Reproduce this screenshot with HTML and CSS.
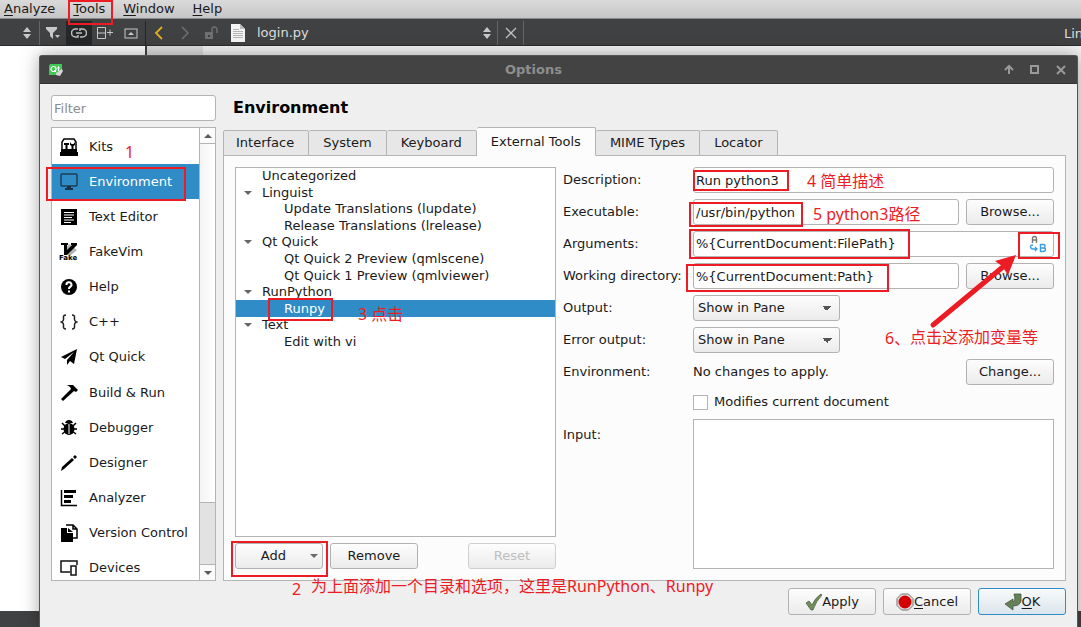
FILE: index.html
```html
<!DOCTYPE html>
<html lang="en">
<head>
<meta charset="utf-8">
<title>Options</title>
<link rel="stylesheet" href="styles.css">
</head>
<body>
<div class="ide">
  <nav class="menubar">
    <a href="#"><u>A</u>nalyze</a>
    <a href="#"><u>T</u>ools</a>
    <a href="#"><u>W</u>indow</a>
    <a href="#"><u>H</u>elp</a>
  </nav>
  <div class="toolbar">
    <div class="tool-left">
      <button class="tool tool-sep" aria-label="Switch view"><svg width="10" height="12" viewBox="0 0 10 12"><path d="M1 5L5 0L9 5ZM1 7H9L5 12Z" fill="#c8c8c8"/></svg></button>
      <button class="tool" aria-label="Filter"><svg width="16" height="14" viewBox="0 0 16 14"><path d="M1 1H12V3L8 7V13L5 10V7L1 3Z" fill="#c8c8c8"/><path d="M10 9H15L12.500 12Z" fill="#c8c8c8"/></svg></button>
      <button class="tool tool-on" aria-label="Synchronize"><svg width="16" height="12" viewBox="0 0 16 12" fill="none" stroke="#c0c0c0" stroke-width="1.500"><path d="M7 2H4.500A3.500 3.500 0 0 0 4.500 10H7V8M9 10H11.500A3.500 3.500 0 0 0 11.500 2H9V4M5 6H11"/></svg></button>
      <button class="tool" aria-label="Split"><svg width="16" height="14" viewBox="0 0 16 14" fill="none" stroke="#c8c8c8"><path d="M.5 1.500H8.500V12.500H.5ZM.5 7H8.500M10 6.500H16M13 3.500V9.500"/></svg></button>
      <button class="tool" aria-label="Close pane"><svg width="14" height="12" viewBox="0 0 14 12"><rect x="1" y="2" width="12" height="9" fill="none" stroke="#c8c8c8"/><path d="M4 8L7 5L10 8Z" fill="#c8c8c8"/></svg></button>
    </div>
    <button class="tool" aria-label="Back"><svg width="10" height="14" viewBox="0 0 10 14"><path d="M8 1L2 7L8 13" fill="none" stroke="#e0b01c" stroke-width="1.800"/></svg></button>
    <button class="tool" aria-label="Forward"><svg width="10" height="14" viewBox="0 0 10 14"><path d="M2 1L8 7L2 13" fill="none" stroke="#707070" stroke-width="1.500"/></svg></button>
    <button class="tool" aria-label="Unlocked"><svg width="14" height="14" viewBox="0 0 14 14"><path d="M1 6H9V13H1Z" fill="#707070"/><rect x="4" y="9" width="2" height="2" fill="#404142"/><path d="M8 6V3.500A2.500 2.500 0 0 1 13 3.500V7" fill="none" stroke="#707070" stroke-width="1.500"/></svg></button>
    <button class="file-picker">
      <svg width="14" height="18" viewBox="0 0 14 18"><path d="M0 0H9L14 5V18H0Z" fill="#f4f4f4"/><path d="M9 0V5H14Z" fill="#bbb"/><path d="M2 5.500H8M2 7.500H12M2 9.500H12M2 11.500H12M2 13.500H12" stroke="#b4b4b4"/></svg>
      <span class="file-name">login.py</span>
      <svg width="10" height="12" viewBox="0 0 10 12"><path d="M1 5L5 0L9 5ZM1 7H9L5 12Z" fill="#c8c8c8"/></svg>
    </button>
    <button class="tool tool-sep" aria-label="Close document"><svg width="12" height="12" viewBox="0 0 12 12"><path d="M1 1L11 11M11 1L1 11" stroke="#c0c0c0" stroke-width="1.300"/></svg></button>
    <span class="cursor-info">Line: 1</span>
  </div>
  <div class="workspace">
    <div class="project-pane"></div>
    <div class="gutter"></div>
    <div class="code"></div>
  </div>
  <div class="statusbar"></div>
</div>

<section class="dialog">
  <header class="titlebar">
    <svg width="16" height="14" viewBox="0 0 16 14"><path d="M2 1H14V8L10 12H1V3Z" fill="#3fc852"/><circle cx="5.500" cy="6" r="2.500" fill="none" stroke="#fff" stroke-width="1.200"/><path d="M6 7L8 9M10.500 3V8H12M9 5H12" stroke="#fff" fill="none"/><path d="M8 10L14 6L15 8L12 13L8 12Z" fill="#d5d5d5"/></svg>
    <h1>Options</h1>
    <div class="window-buttons">
      <button aria-label="Shade"><svg width="12" height="12" viewBox="0 0 12 12"><path d="M6 2V10M2 6L6 2L10 6" fill="none" stroke="#999" stroke-width="2"/></svg></button>
      <button aria-label="Maximize"><svg width="12" height="12" viewBox="0 0 12 12"><rect x="2" y="2" width="7" height="7" fill="none" stroke="#999" stroke-width="2"/></svg></button>
      <button aria-label="Close"><svg width="12" height="12" viewBox="0 0 12 12"><path d="M2 2L10 10M10 2L2 10" stroke="#999" stroke-width="2"/></svg></button>
    </div>
  </header>
  <div class="dialog-body">
    <aside class="sidebar">
      <input class="field filter" type="text" placeholder="Filter" aria-label="Filter">
      <div class="category-box">
        <ul class="categories">
          <li><svg width="18" height="18" viewBox="0 0 18 18"><path d="M2 11V4L4 1H14L16 4V11" fill="none" stroke="#000" stroke-width="1.500"/><path d="M4 5H9V7H7.500V11H5.500V7H4ZM10 4V7L11.500 8V11H13.500V8L15 7V4L13.500 6H11.500Z" fill="#000"/><path d="M1 11H17V14H1ZM0 14H18V18H0Z" fill="#000"/></svg>Kits</li>
          <li class="selected"><svg width="18" height="18" viewBox="0 0 18 18"><rect x="1" y="1" width="16" height="12" rx="1" fill="none" stroke="#1d3f55" stroke-width="1.500"/><path d="M7 13H11V15H13V17H5V15H7Z" fill="#143448"/></svg>Environment</li>
          <li><svg width="18" height="18" viewBox="0 0 18 18"><path d="M1 1H17V17H1Z"/><path d="M4 4.500H14M4 7H14M4 9.500H12M4 12H14M4 14.500H11" stroke="#fff"/></svg>Text Editor</li>
          <li><svg class="vim" width="18" height="18" viewBox="0 0 18 18"><path d="M9 1L17 7L10 13L4 8Z" fill="#b4b4b4"/><path d="M1 0H8V2H7V7L12 2H11V0H17V2L7 12H4V2H1Z"/><text x="-1" y="17" class="fake-label">Fake</text></svg>FakeVim</li>
          <li><svg width="18" height="18" viewBox="0 0 18 18"><circle cx="9" cy="9" r="8"/><path d="M6.500 7A2.500 2.500 0 1 1 10 9Q9 9.500 9 11" fill="none" stroke="#fff" stroke-width="2"/><rect x="8" y="12.500" width="2" height="2" fill="#fff"/></svg>Help</li>
          <li><svg width="18" height="18" viewBox="0 0 18 18"><path d="M6 2Q3 2 3.500 5Q4 8 1.500 9Q4 10 3.500 13Q3 16 6 16M12 2Q15 2 14.500 5Q14 8 16.500 9Q14 10 14.500 13Q15 16 12 16" fill="none" stroke="#222" stroke-width="1.500"/></svg>C++</li>
          <li><svg width="18" height="18" viewBox="0 0 18 18"><path d="M17 1L1 9L5 11L14 4L7 12V17L10 13L14 16Z"/></svg>Qt Quick</li>
          <li><svg width="18" height="18" viewBox="0 0 18 18"><path d="M7 1H13L18 6L16 8L14 7L3 17L1 15L11 5L10 3Z"/></svg>Build &amp; Run</li>
          <li><svg width="18" height="18" viewBox="0 0 18 18"><path d="M5 4Q6 1 9 1Q12 1 13 4Z"/><ellipse cx="9" cy="10" rx="5.500" ry="6"/><path d="M2 4L5 7M16 4L13 7M1 10H5M13 10H17M2 15L6 12M16 15L12 12" stroke="#000" stroke-width="1.500"/><path d="M9 5V15" stroke="#fff"/></svg>Debugger</li>
          <li><svg width="18" height="18" viewBox="0 0 18 18"><path d="M1 17L2 13L12 4L14 6L4 15ZM13 3L15 1L17 3L15 5Z"/></svg>Designer</li>
          <li><svg width="18" height="18" viewBox="0 0 18 18"><path d="M1.500 1V16.500H17" fill="none" stroke="#000" stroke-width="1.500"/><path d="M4 1H16V4H4ZM4 6H13V9H4ZM4 11H11V14H4Z"/></svg>Analyzer</li>
          <li><svg width="18" height="18" viewBox="0 0 18 18"><path d="M6 1H13L17 5V14H12M13 1V5H17" fill="#fff" stroke="#000" stroke-width="1.500"/><path d="M1 4H7V9H13V18H1ZM8 4L13 8H8Z"/></svg>Version Control</li>
          <li><svg width="18" height="18" viewBox="0 0 18 18"><path d="M10 13H1V2H17V6" fill="none" stroke="#111" stroke-width="1.500"/><rect x="11" y="7" width="5" height="9" fill="#fff" stroke="#111" stroke-width="1.500"/></svg>Devices</li>
        </ul>
        <div class="scrollbar">
          <button aria-label="Scroll up"><svg width="8" height="4" viewBox="0 0 8 4"><path d="M0 4L4 0L8 4Z" fill="#5a5a5a"/></svg></button>
          <div class="scroll-thumb"></div>
          <div class="scroll-track"></div>
          <button aria-label="Scroll down"><svg width="8" height="4" viewBox="0 0 8 4"><path d="M0 0L4 4L8 0Z" fill="#5a5a5a"/></svg></button>
        </div>
      </div>
    </aside>
    <main class="page">
      <h2>Environment</h2>
      <div class="tabs" role="tablist">
        <button class="tab" role="tab">Interface</button>
        <button class="tab" role="tab">System</button>
        <button class="tab" role="tab">Keyboard</button>
        <button class="tab tab-active" role="tab" aria-selected="true">External Tools</button>
        <button class="tab" role="tab">MIME Types</button>
        <button class="tab" role="tab">Locator</button>
      </div>
      <div class="panel">
        <div class="tools-column">
          <div class="tree-box">
            <ul class="tree">
              <li>Uncategorized</li>
              <li class="open">Linguist</li>
              <li class="child">Update Translations (lupdate)</li>
              <li class="child">Release Translations (lrelease)</li>
              <li class="open">Qt Quick</li>
              <li class="child">Qt Quick 2 Preview (qmlscene)</li>
              <li class="child">Qt Quick 1 Preview (qmlviewer)</li>
              <li class="open">RunPython</li>
              <li class="child selected">Runpy</li>
              <li class="open">Text</li>
              <li class="child">Edit with vi</li>
            </ul>
          </div>
          <div class="tree-actions">
            <button class="btn add">Add<svg width="8" height="4" viewBox="0 0 8 4"><path d="M0 0L4 4L8 0Z" fill="#6a6a6a"/></svg></button>
            <button class="btn">Remove</button>
            <button class="btn reset" disabled>Reset</button>
          </div>
        </div>
        <form class="form">
          <label for="desc">Description:</label>
          <input class="field wide" id="desc" type="text" value="Run python3">
          <label for="exec">Executable:</label>
          <input class="field" id="exec" type="text" value="/usr/bin/python">
          <button class="btn" type="button">Browse...</button>
          <label for="args">Arguments:</label>
          <div class="field wide with-icon">
            <input id="args" type="text" value="%{CurrentDocument:FilePath}">
            <button type="button" aria-label="Insert variable"><svg width="18" height="18" viewBox="0 0 18 18" fill="none" stroke-width="1.400"><path d="M3.500 8V3.500Q3.500 1.500 5.500 1.500Q7.500 1.500 7.500 3.500V8M3.500 5H7.500" stroke="#777"/><path d="M4 10Q1 10 1.500 12Q2 14 4 14H8M6 12L8 14L6 16M11.500 9.500V16.500H14Q16.500 16.500 16.500 14.500Q16.500 13 14.500 13Q16 13 16 11.200Q16 9.500 14 9.500ZM11.500 13H15" stroke="#3a9ee4"/></svg></button>
          </div>
          <label for="cwd">Working directory:</label>
          <input class="field" id="cwd" type="text" value="%{CurrentDocument:Path}">
          <button class="btn" type="button">Browse...</button>
          <label for="out">Output:</label>
          <select class="select wide" id="out"><option>Show in Pane</option></select>
          <label for="err">Error output:</label>
          <select class="select wide" id="err"><option>Show in Pane</option></select>
          <span>Environment:</span>
          <span>No changes to apply.</span>
          <button class="btn" type="button">Change...</button>
          <label class="check"><input type="checkbox">Modifies current document</label>
          <label class="input-label" for="stdin">Input:</label>
          <textarea class="wide" id="stdin"></textarea>
        </form>
      </div>
    </main>
  </div>
  <footer class="dialog-actions">
    <button class="btn"><svg width="17" height="18" viewBox="0 0 17 18"><path d="M1 10L4 8L7 12Q10 5 16 1L17 2Q11 8 8 17H6Z" fill="#6f8d5c" stroke="#4c6540" stroke-width=".8"/></svg>Apply</button>
    <button class="btn"><svg width="18" height="18" viewBox="0 0 18 18"><path d="M5.500 1H12.500L17 5.500V12.500L12.500 17H5.500L1 12.500V5.500Z" fill="#ddd" stroke="#777"/><circle cx="9" cy="9" r="6.500" fill="#d40000"/></svg><span><u>C</u>ancel</span></button>
    <button class="btn btn-default"><svg width="18" height="18" viewBox="0 0 18 18"><path d="M10 1H17V8Q16 13 9 13V17L1 11L9 6V9Q12 8 10 1Z" fill="#66805a" stroke="#445a3c" stroke-width=".8"/></svg><span><u>O</u>K</span></button>
  </footer>
</section>

<div class="notes">
  <svg class="marks" width="1081" height="627" viewBox="0 0 1081 627" fill="none" stroke="#ed1c24" stroke-width="2">
    <rect x="69" y="1" width="43" height="23"/>
    <rect x="47" y="168" width="138" height="32"/>
    <rect x="269" y="299" width="63" height="21"/>
    <rect x="232" y="542" width="95" height="34"/>
    <rect x="694" y="171" width="94" height="19"/>
    <rect x="690" y="203" width="112" height="23"/>
    <rect x="690" y="230" width="219" height="28"/>
    <rect x="687" y="265" width="201" height="26"/>
    <rect x="1019" y="233" width="40" height="25"/>
    <path d="M933 325L1004 266" stroke-width="5" stroke-linecap="round"/>
    <path d="M1016 255L995 261L1002 266L1008 275Z" fill="#ed1c24" stroke="none"/>
  </svg>
  <span class="note note-1">1</span>
  <span class="note note-2">2</span>
  <span class="note note-2-text">为上面添加一个目录和选项，这里是RunPython、Runpy</span>
  <span class="note note-3">3 点击</span>
  <span class="note note-4">4 简单描述</span>
  <span class="note note-5">5 python3路径</span>
  <span class="note note-6">6、</span>
  <span class="note note-6-text">点击这添加变量等</span>
</div>
</body>
</html>
```

FILE: styles.css
```css
* { box-sizing: border-box; }

body {
  margin: 0;
  height: 100vh;
  overflow: hidden;
  position: relative;
  font: 13px/16px "DejaVu Sans", "Noto Sans CJK SC", sans-serif;
  color: #1a1a1a;
}

button, input, select, textarea { font: inherit; color: inherit; margin: 0; }
button { padding: 0; border: 0; background: none; }
ul { list-style: none; margin: 0; padding: 0; }
h1, h2 { margin: 0; }
svg { flex: none; display: block; }
u { text-underline-offset: 2px; }

/* Main window behind the dialog */
.ide { display: flex; flex-direction: column; height: 100%; }

.menubar {
  display: flex;
  gap: 18px;
  height: 19px;
  padding: 0 4px;
  line-height: 18px;
  background: linear-gradient(#dadada, #c6c6c6);
  border-bottom: 1px solid #8a8a8a;
}
.menubar a { color: #1a1a1a; text-decoration: none; }

.toolbar {
  display: flex;
  align-items: stretch;
  height: 27px;
  padding-top: 2px;
  background: #404142;
  border-bottom: 1px solid #2c2c2c;
  overflow: hidden;
}
.tool-left {
  display: flex;
  width: 146px;
  padding-left: 14px;
  border-right: 1px solid #252525;
}
.tool { display: flex; flex: none; width: 26px; align-items: center; justify-content: center; }
.tool-sep { border-right: 1px solid #666; }
.tool-on { background: #262728; }
.file-picker {
  display: flex;
  align-items: center;
  width: 274px;
  padding: 0 5px 0 7px;
  gap: 12px;
  border-right: 1px solid #666;
  color: #ddd;
  font-size: 13px;
}
.file-name { flex: 1; text-align: left; }
.cursor-info { width: 17px; margin-left: auto; line-height: 26px; color: #ddd; white-space: nowrap; }

.workspace { display: flex; flex: 1; }
.project-pane { width: 147px; background: #fff; border-right: 2px solid #404142; }
.gutter { width: 56px; background: #dedede; }
.code { flex: 1; background: #f4f4f4; }
.statusbar { height: 16px; background: #404142; }

/* Options dialog */
.dialog {
  position: absolute;
  top: 55px;
  right: 3px;
  bottom: 0;
  left: 39px;
  display: flex;
  flex-direction: column;
  background: #efefef;
  border: 1px solid #555;
  border-bottom: 0;
  border-radius: 3px 3px 0 0;
  box-shadow: 0 0 18px rgba(0, 0, 0, .35);
}
.titlebar {
  display: flex;
  align-items: center;
  height: 28px;
  padding: 0 10px 0 8px;
  background: #434343;
  border-bottom: 1px solid #333;
}
.titlebar h1 { flex: 1; font-size: 13px; text-align: center; color: #8e8e8e; }
.window-buttons { display: flex; gap: 14px; }

.dialog-body { display: flex; flex: 1; gap: 7px; padding: 11px 11px 0; min-height: 0; }
.sidebar { display: flex; flex-direction: column; flex: none; width: 165px; gap: 6px; }

.field {
  width: 100%;
  min-width: 0;
  height: 26px;
  padding: 0 2px;
  background: #fff;
  border: 1px solid #b4b4b4;
  border-radius: 3px;
  outline: 0;
}
.filter::placeholder { color: #8c8c8c; opacity: 1; }

.category-box { display: flex; flex: 1; min-height: 0; border: 1px solid #b4b4b4; background: #fff; overflow: hidden; }
.categories {
  display: grid;
  grid-template-rows: repeat(13, 1fr);
  flex: 1;
  height: 458px;
  padding-top: 1px;
}
.categories li { display: flex; align-items: center; gap: 11px; padding-left: 8px; white-space: nowrap; }
.selected { background: #308cc6; color: #fff; }
.vim { overflow: visible; }
.fake-label { font: bold 7px "DejaVu Sans", sans-serif; }

.scrollbar { display: flex; flex-direction: column; width: 16px; border-left: 1px solid #b4b4b4; }
.scrollbar button { display: flex; align-items: center; justify-content: center; height: 15px; background: #fbfbfb; }
.scroll-thumb { flex: 361; background: linear-gradient(90deg, #f4f4f4, #fff); border: solid #b4b4b4; border-width: 1px 0; }
.scroll-track { flex: 61; background: #e2e2e2; border-bottom: 1px solid #b4b4b4; }

.page { display: flex; flex-direction: column; flex: 1; min-width: 0; }
.page h2 { padding: 3px 10px 9px; font-size: 16px; line-height: 20px; color: #000; }

.tabs { display: flex; align-items: flex-end; height: 29px; }
.tab {
  height: 26px;
  padding: 0 14px;
  background: #e7e7e7;
  border: 1px solid #b4b4b4;
  border-left-width: 0;
  border-radius: 2px 2px 0 0;
}
.tab:first-child { padding-left: 12px; border-left-width: 1px; }
.tab-active {
  position: relative;
  z-index: 1;
  height: 29px;
  background: #fcfcfc;
  border-bottom-color: #fcfcfc;
}

.panel {
  display: flex;
  flex: 1;
  gap: 7px;
  margin-top: -1px;
  padding: 11px;
  min-height: 0;
  background: #fcfcfc;
  border: 1px solid #b4b4b4;
}
.tools-column { display: flex; flex: none; flex-direction: column; gap: 6px; width: 321px; }
.tree-box { flex: 1; background: #fff; border: 1px solid #b4b4b4; }
.tree { display: grid; grid-template-rows: repeat(11, 1fr); height: 182px; }
.tree li { display: flex; align-items: center; padding-left: 26px; }
.tree .child { padding-left: 48px; }
.tree .open { padding-left: 8px; }
.open::before {
  content: "";
  width: 0;
  margin-right: 10px;
  border: 4px solid transparent;
  border-top-color: #666;
  border-bottom: 0;
}

.tree-actions { display: flex; gap: 7px; }
.btn {
  display: flex;
  align-items: center;
  justify-content: center;
  flex: none;
  width: 88px;
  height: 26px;
  background: linear-gradient(#fdfdfd, #ebebeb);
  border: 1px solid #b2b2b2;
  border-radius: 3px;
}
.btn:disabled { color: #bebebe; border-color: #cfcfcf; }
.add { justify-content: flex-end; gap: 24px; padding-right: 4px; }
.reset { margin-left: auto; }

.form {
  display: grid;
  grid-template-columns: 123px 1fr 88px;
  grid-template-rows: repeat(7, 26px) 22px 1fr;
  gap: 6px 7px;
  align-items: center;
  flex: 1;
  min-width: 0;
}
.form > label, .form > span { white-space: nowrap; }
.wide { grid-column: 2 / -1; }
.with-icon { display: flex; padding-right: 0; }
.with-icon input { flex: 1; min-width: 0; padding: 0; border: 0; background: none; outline: 0; }
.with-icon button { padding: 3px 6px; }
.select {
  width: 147px;
  height: 26px;
  padding: 0 4px;
  appearance: none;
  border: 1px solid #b2b2b2;
  border-radius: 3px;
  background:
    linear-gradient(to bottom right, #555 50%, transparent 50%) right 7px center / 5px 5px no-repeat,
    linear-gradient(to bottom left, #555 50%, transparent 50%) right 12px center / 5px 5px no-repeat,
    linear-gradient(#fdfdfd, #ebebeb);
}
.form .check { display: flex; grid-column: 2 / -1; align-items: center; gap: 6px; }
.check input { appearance: none; width: 15px; height: 15px; background: #fff; border: 1px solid #b4b4b4; }
.form .input-label { align-self: start; padding-top: 8px; }
textarea { width: 100%; height: 100%; resize: none; background: #fff; border: 1px solid #b4b4b4; outline: 0; }

.dialog-actions { display: flex; justify-content: flex-end; gap: 7px; padding: 7px 11px 12px; }
.dialog-actions .btn { height: 27px; }
.btn-default { border-color: #308cc6; background: linear-gradient(#f8fafb, #dbe5ec); }

/* Tutorial marks drawn over the windows */
.notes { position: absolute; inset: 0; overflow: hidden; pointer-events: none; }
.note {
  position: absolute;
  font: 16px/20px "Noto Sans", "Noto Sans CJK SC", sans-serif;
  color: #ed1c24;
  white-space: nowrap;
}
.note-1 { left: 125px; top: 142px; }
.note-2 { left: 292px; top: 579px; }
.note-2-text { left: 311px; top: 576px; }
.note-3 { left: 358px; top: 304px; }
.note-4 { left: 807px; top: 171px; }
.note-5 { left: 813px; top: 204px; }
.note-6 { left: 885px; top: 328px; }
.note-6-text { left: 910px; top: 327px; }
```
